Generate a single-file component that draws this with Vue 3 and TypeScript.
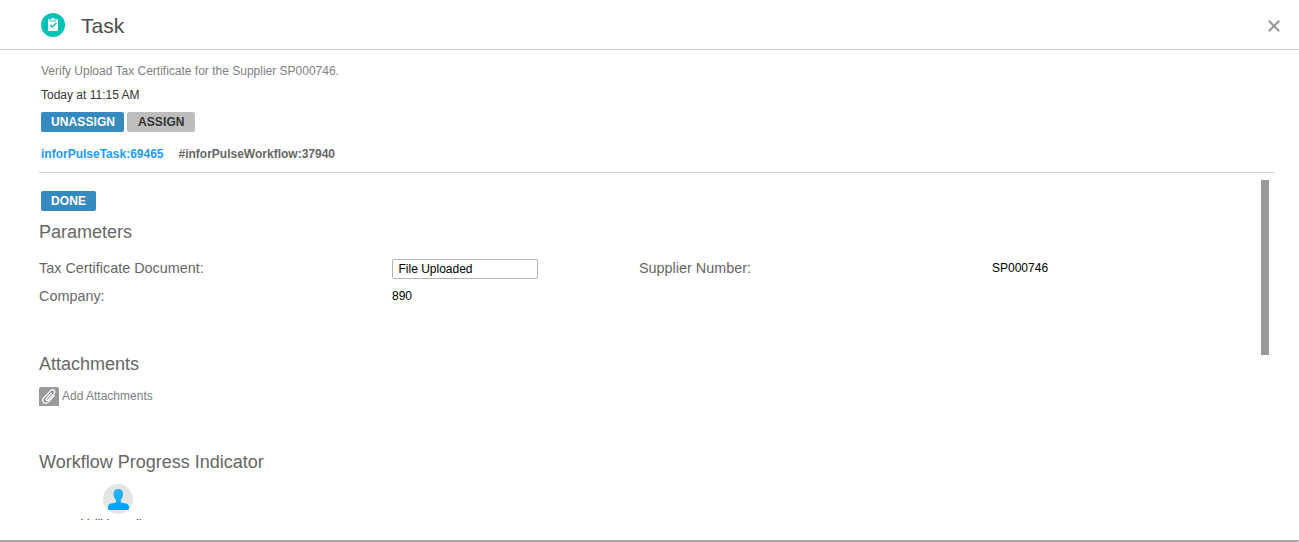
<script setup lang="ts">
interface Param { label: string; value: string; editable?: boolean }
const params: Param[] = [
  { label: 'Tax Certificate Document:', value: 'File Uploaded', editable: true },
  { label: 'Supplier Number:', value: 'SP000746' },
  { label: 'Company:', value: '890' },
]
</script>

<template>
  <div class="dialog">
    <header class="head">
      <svg class="logo" width="24" height="24" viewBox="0 0 24 24">
        <circle cx="12" cy="12" r="12" fill="#00c2b4" />
        <rect x="7" y="6" width="10" height="12" rx=".8" fill="#fff" />
        <path d="M9 8V6.200q0-.7.7-.7h.8q.2-1.200 1.500-1.200t1.500 1.200h.8q.7 0 .7.7V8z" fill="#e0f8f6" stroke="#00c2b4" stroke-width=".7" />
        <path d="M9.200 12l2.100 2.100 4-4" fill="none" stroke="#00c2b4" stroke-width="1.400" />
      </svg>
      <h1>Task</h1>
      <svg class="close" width="12" height="12" viewBox="0 0 12 12">
        <path d="M.8.8l10.400 10.400M11.200.8L.8 11.200" stroke="#999" stroke-width="2" />
      </svg>
    </header>
    <section class="summary">
      <p class="desc">Verify Upload Tax Certificate for the Supplier SP000746.</p>
      <p class="date">Today at 11:15 AM</p>
      <div class="actions">
        <button class="btn unassign">UNASSIGN</button>
        <button class="btn assign">ASSIGN</button>
      </div>
      <div class="tags"><a>inforPulseTask:69465</a><span>#inforPulseWorkflow:37940</span></div>
    </section>
    <div class="body">
      <main class="content">
        <button class="btn done">DONE</button>
        <h2 class="h-params">Parameters</h2>
        <div class="params">
          <div v-for="p in params" :key="p.label" class="param">
            <label>{{ p.label }}</label>
            <input v-if="p.editable" :value="p.value">
            <span v-else>{{ p.value }}</span>
          </div>
        </div>
        <h2 class="h-attach">Attachments</h2>
        <div class="attach">
          <svg width="20" height="19" viewBox="0 0 20 19">
            <path d="M2 0h16a2 2 0 0 1 2 2v17H0V2a2 2 0 0 1 2-2z" fill="#999" />
            <path d="M12.200 6.300L7.400 11.500c-1.200 1.500.5 2.800 1.700 1.500l5.900-6.300c2.500-2.900-.9-5.500-3.300-3L4.800 10.600c-3.200 3.800 1.300 7.700 4.700 4.200l5.900-6.300" fill="none" stroke="#fff" stroke-width="1.200" stroke-linecap="round" />
          </svg>
          <span>Add Attachments</span>
        </div>
        <h2 class="h-flow">Workflow Progress Indicator</h2>
        <div class="person">
          <svg width="30" height="30" viewBox="0 0 30 30">
            <defs><linearGradient id="blue" x2="0" y2="1"><stop stop-color="#2cb5f9" /><stop offset="1" stop-color="#009dff" /></linearGradient></defs>
            <circle cx="15" cy="15" r="15" fill="#e5e5e5" />
            <path d="M15.300 5c3.300 0 4.700 2 4.700 4.800 0 3-1 4.800-2.200 6.200v2.200c1 .8 3.200.9 5.200 1.300 2.200.4 3 2 3 4.300 0 1.500-.5 2.200-1.700 2.200H6.700C5.500 26 5 25.300 5 23.800c0-2.300.8-3.900 3-4.300 2-.4 4-.5 5-1.300V16c-1.400-1.400-2.400-3.200-2.400-6.200 0-2.800 1.400-4.800 4.700-4.800z" fill="url(#blue)" />
          </svg>
          <span>Velli Lomallen</span>
        </div>
      </main>
      <div class="scroll"></div>
    </div>
  </div>
</template>

<style>
body { background: #fff; }
</style>
<style scoped>
.dialog { box-sizing: border-box; width: 1299px; height: 542px; border-bottom: 2px solid #a3a3a3; border-radius: 0 2px 2px 0; background: #fff; font-family: "Liberation Sans", Arial, sans-serif; font-size: 12px; color: #666; overflow: hidden; }
.head { box-sizing: border-box; height: 50px; border-bottom: 1px solid #d1d1d1; display: flex; align-items: center; padding: 1px 19px 0 41px; }
.logo { display: block; }
h1 { margin: 2px auto 0 16px; font-size: 21px; line-height: 24px; font-weight: 400; color: #4d4d4d; }
.close { margin-top: 1px; }
.summary { box-sizing: border-box; height: 123px; margin: 0 25px 0 39px; padding: 13px 2px 0; border-bottom: 1px solid #d1d1d1; }
p { margin: 0; line-height: 16px; }
.desc { color: #808080; }
.date { color: #333; margin-top: 8px; }
.actions { display: flex; gap: 3px; margin-top: 9px; }
.btn { box-sizing: border-box; display: block; height: 20px; padding: 0 0 0 10px; border: 0; border-radius: 2px; background: #368ac0; color: #fff; font: bold 12px/20px "Liberation Sans", Arial, sans-serif; letter-spacing: .1px; text-align: left; }
.unassign { width: 83px; }
.assign { width: 68px; padding-left: 11px; background: #bdbdbd; color: #333; }
.done { width: 55px; margin-left: 2px; }
.tags { display: flex; gap: 15px; margin-top: 14px; line-height: 16px; font-weight: bold; }
.tags a { color: #1d9af4; }
.body { display: flex; height: 347px; padding-left: 39px; overflow: hidden; }
.content { box-sizing: border-box; width: 1222px; padding-top: 18px; overflow: hidden; }
.scroll { width: 8px; height: 175px; margin-top: 7px; background: #999; }
h2 { margin: 0; font-size: 18px; line-height: 22px; font-weight: 400; color: #666; }
.h-params { margin-top: 10px; }
.params { display: grid; grid-template-columns: 600px 600px; grid-auto-rows: 28px; margin-top: 11px; }
.param { display: grid; grid-template-columns: 353px auto; align-items: center; justify-content: start; color: #000; }
label { font-size: 14.4px; line-height: 16px; color: #666; }
input { box-sizing: border-box; width: 146px; height: 20px; margin: 2px 0 0; padding: 0 5.5px; border: 1px solid #b3b3b3; border-radius: 2px; color: #000; font: 12px "Liberation Sans", Arial, sans-serif; }
.h-attach { margin-top: 43px; }
.attach { display: flex; gap: 3px; margin-top: 12px; line-height: 18px; color: #808080; }
.attach svg { display: block; }
.h-flow { margin-top: 45px; }
.person { display: flex; flex-direction: column; align-items: center; width: 158px; margin-top: 11px; color: #333; }
.person span { margin-top: 2px; line-height: 16px; }
</style>
